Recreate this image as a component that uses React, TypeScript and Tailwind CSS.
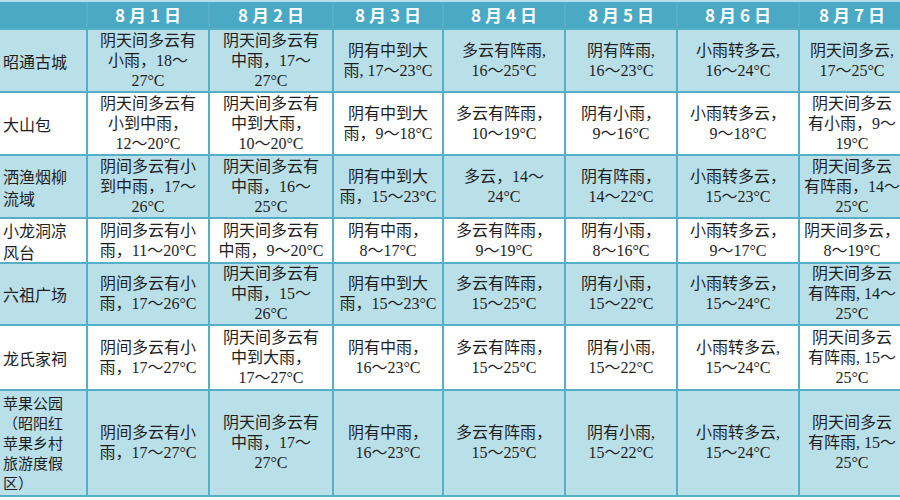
const days = ["8月1日", "8月2日", "8月3日", "8月4日", "8月5日", "8月6日", "8月7日"]

type Row = { place: string[]; cells: string[][] }

const rows: Row[] = [
  {
    place: ["昭通古城"],
    cells: [
      ["阴天间多云有", "小雨，18～", "27°C"],
      ["阴天间多云有", "中雨，17～", "27°C"],
      ["阴有中到大", "雨, 17～23°C"],
      ["多云有阵雨,", "16～25°C"],
      ["阴有阵雨,", "16～23°C"],
      ["小雨转多云,", "16～24°C"],
      ["阴天间多云,", "17～25°C"],
    ],
  },
  {
    place: ["大山包"],
    cells: [
      ["阴天间多云有", "小到中雨，", "12～20°C"],
      ["阴天间多云有", "中到大雨，", "10～20°C"],
      ["阴有中到大", "雨，9～18°C"],
      ["多云有阵雨，", "10～19°C"],
      ["阴有小雨，", "9～16°C"],
      ["小雨转多云，", "9～18°C"],
      ["阴天间多云", "有小雨，9～", "19°C"],
    ],
  },
  {
    place: ["洒渔烟柳", "流域"],
    cells: [
      ["阴间多云有小", "到中雨，17～", "26°C"],
      ["阴天间多云有", "中雨，16～", "25°C"],
      ["阴有中到大", "雨，15～23°C"],
      ["多云，14～", "24°C"],
      ["阴有阵雨，", "14～22°C"],
      ["小雨转多云，", "15～23°C"],
      ["阴天间多云", "有阵雨，14～", "25°C"],
    ],
  },
  {
    place: ["小龙洞凉", "风台"],
    cells: [
      ["阴间多云有小", "雨，11～20°C"],
      ["阴天间多云有", "中雨，9～20°C"],
      ["阴有中雨，", "8～17°C"],
      ["多云有阵雨，", "9～19°C"],
      ["阴有小雨，", "8～16°C"],
      ["小雨转多云，", "9～17°C"],
      ["阴天间多云，", "8～19°C"],
    ],
  },
  {
    place: ["六祖广场"],
    cells: [
      ["阴间多云有小", "雨，17～26°C"],
      ["阴天间多云有", "中雨，15～", "26°C"],
      ["阴有中到大", "雨，15～23°C"],
      ["多云有阵雨，", "15～25°C"],
      ["阴有小雨，", "15～22°C"],
      ["小雨转多云，", "15～24°C"],
      ["阴天间多云", "有阵雨, 14～", "25°C"],
    ],
  },
  {
    place: ["龙氏家祠"],
    cells: [
      ["阴间多云有小", "雨，17～27°C"],
      ["阴天间多云有", "中到大雨，", "17～27°C"],
      ["阴有中雨，", "16～23°C"],
      ["多云有阵雨，", "15～25°C"],
      ["阴有小雨,", "15～22°C"],
      ["小雨转多云,", "15～24°C"],
      ["阴天间多云", "有阵雨, 15～", "25°C"],
    ],
  },
  {
    place: ["苹果公园", "（昭阳红", "苹果乡村", "旅游度假", "区）"],
    cells: [
      ["阴间多云有小", "雨，17～27°C"],
      ["阴天间多云有", "中雨，17～", "27°C"],
      ["阴有中雨，", "16～23°C"],
      ["多云有阵雨，", "15～25°C"],
      ["阴有小雨,", "15～22°C"],
      ["小雨转多云,", "15～24°C"],
      ["阴天间多云", "有阵雨, 15～", "25°C"],
    ],
  },
]

export default function App() {
  return (
    <div className="h-[500px] w-[900px] overflow-hidden bg-white">
      <div className="h-[2px] w-[904px] bg-[#b3dfea]" />
      <div
        className="grid w-[904px] gap-[2px] bg-[#56afc8] pb-[2px] text-[16px] leading-[20px] text-[#1e1e1e] grid-cols-[86px_120px_122px_108px_120px_110px_120px_104px] grid-rows-[26px_61px_61px_61px_43px_60px_63px_104px]"
        style={{ fontFamily: '"Liberation Serif", "Noto Sans CJK SC", serif' }}
      >
        <div className="bg-[#4aa9c4]" />
        {days.map((d) => (
          <div
            key={d}
            className="flex items-center justify-center bg-[#4aa9c4] pl-[4px] text-[17px] font-bold tracking-[4px] text-white"
            style={{ fontFamily: '"Noto Sans CJK SC", sans-serif' }}
          >
            {d}
          </div>
        ))}
        {rows.map((row, ri) => {
          const bg = ri % 2 === 0 ? "bg-[#b9dfe9]" : "bg-white"
          return [
            <div
              key={`p${ri}`}
              className={`flex flex-col justify-center pl-[3px] ${bg} ${row.place.length > 2 ? "text-[15px] leading-[20px]" : "leading-[22px]"}`}
              style={{ fontFamily: '"Noto Sans CJK SC", sans-serif' }}
            >
              {row.place.map((l) => (
                <div key={l}>{l}</div>
              ))}
            </div>,
            ...row.cells.map((cell, ci) => (
              <div
                key={`c${ri}-${ci}`}
                className={`flex flex-col items-center justify-center whitespace-nowrap text-center ${bg}`}
              >
                {cell.map((l, li) => (
                  <div key={li}>{l}</div>
                ))}
              </div>
            )),
          ]
        })}
      </div>
    </div>
  )
}
